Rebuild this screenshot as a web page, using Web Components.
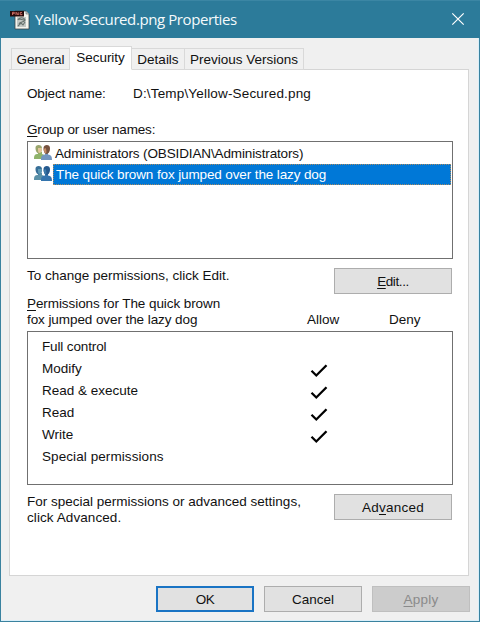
<!DOCTYPE html>
<html lang="en">
<head>
  <meta charset="utf-8">
  <title>Yellow-Secured.png Properties</title>
  <style>
    html, body {
      margin: 0;
      height: 100%;
      overflow: hidden;
    }
    body {
      font: 13.5px/16px "Liberation Sans", Arial, sans-serif;
      color: #111;
    }
  </style>
</head>
<body>
  <properties-window>
    <title-bar slot="title">Yellow-Secured.png Properties</title-bar>
    <tab-strip slot="tabs">
      <tab-item style="width: 59px">General</tab-item>
      <tab-item active style="width: 62px; letter-spacing: -.05px">Security</tab-item>
      <tab-item style="width: 53px">Details</tab-item>
      <tab-item style="width: 119px">Previous Versions</tab-item>
    </tab-strip>
    <security-page></security-page>
    <push-button slot="actions" default style="width: 98px; letter-spacing: -.6px">OK</push-button>
    <push-button slot="actions" style="width: 98px">Cancel</push-button>
    <push-button slot="actions" disabled style="width: 98px; letter-spacing: .25px"><u>A</u>pply</push-button>
  </properties-window>

  <script>
    // Window frame: title bar, tabs, page and the bottom row of buttons
    class PropertiesWindow extends HTMLElement {
      constructor() {
        super();
        this.attachShadow({ mode: 'open' });
        this.shadowRoot.innerHTML = `
          <style>
            :host {
              display: flex;
              flex-direction: column;
              box-sizing: border-box;
              width: 480px;
              height: 622px;
              background: #f0f0f0;
              border: 1px solid #3a829f;
              border-top: none;
              box-shadow: inset -1px 0 #d9effa, inset 0 -1px #d9effa;
            }
            .page {
              flex: none;
              box-sizing: border-box;
              width: 460px;
              height: 507px;
              margin-left: 8px;
              background: #fff;
              border: 1px solid #d5d5d5;
            }
            .actions {
              display: flex;
              justify-content: flex-end;
              gap: 10px;
              padding: 10px 9px 0 0;
            }
          </style>
          <slot name="title"></slot>
          <slot name="tabs"></slot>
          <div class="page"><slot></slot></div>
          <div class="actions"><slot name="actions"></slot></div>
        `;
      }
    }

    class TitleBar extends HTMLElement {
      constructor() {
        super();
        this.attachShadow({ mode: 'open' });
        this.shadowRoot.innerHTML = `
          <style>
            :host {
              display: flex;
              flex: none;
              align-items: center;
              box-sizing: border-box;
              height: 38px;
              margin: 0 -1px;
              padding: 0 15px 0 10px;
              background: #2c7b9a;
              border-top: 1px solid #3b86a4;
              color: #f4fafc;
              font: 15px/20px "Open Sans", "Noto Sans", sans-serif;
              letter-spacing: -.41px;
            }
            .text {
              flex: 1;
              margin: 0 0 1px 5px;
              white-space: nowrap;
            }
            svg { flex: none; }
            .close { margin-bottom: 1px; }
          </style>
          <svg width="20" height="20" viewBox="0 0 20 20">
            <path d="M5 1h11l3 3v15H5z" fill="#f5f5ee" stroke="#3b4549" stroke-width=".8"/>
            <path d="M16 1v3h3" fill="#cbd1d1" stroke="#596468" stroke-width=".6"/>
            <path d="M7 7h9v10H7z" fill="#c3c8c5"/>
            <path d="M8 10c1-3 6-3 7 0-1 3-5 1-6 4M8 16l3-3 2 2 2-3M9 9l5 1" fill="none" stroke="#68736f" stroke-width="1.1"/>
            <path d="M0 1h14v5.500H0z" fill="#260b0b"/>
            <path d="M2.500 5V2.300h1.800v1.400H2.600M6 5V2.200L8.200 5V2.200M12 2.500h-1.800v2.200H12V3.800" fill="none" stroke="#ec8177" stroke-width=".8"/>
          </svg>
          <div class="text"><slot></slot></div>
          <svg class="close" width="14" height="14" viewBox="0 0 14 14">
            <path d="M1.300 1.300l11.400 11.400M12.700 1.300L1.300 12.700" stroke="#fff" stroke-width="1.200"/>
          </svg>
        `;
      }
    }

    class TabStrip extends HTMLElement {
      constructor() {
        super();
        this.attachShadow({ mode: 'open' });
        this.shadowRoot.innerHTML = `
          <style>
            :host {
              display: flex;
              flex: none;
              align-items: flex-end;
              height: 32px;
              margin: 0 0 -1px;
              padding-left: 10px;
              z-index: 1;
            }
          </style>
          <slot></slot>
        `;
      }
    }

    class TabItem extends HTMLElement {
      constructor() {
        super();
        this.attachShadow({ mode: 'open' });
        this.shadowRoot.innerHTML = `
          <style>
            :host {
              display: flex;
              justify-content: center;
              box-sizing: border-box;
              height: 22px;
              padding-top: 3px;
              border: 1px solid #d9d9d9;
              border-left: none;
              white-space: nowrap;
            }
            :host(:first-child) { border-left: 1px solid #d9d9d9; }
            :host([active]) {
              height: 24px;
              background: #fff;
              border-bottom-color: #fff;
            }
          </style>
          <span><slot></slot></span>
        `;
      }
    }

    class PushButton extends HTMLElement {
      constructor() {
        super();
        this.attachShadow({ mode: 'open' });
        this.shadowRoot.innerHTML = `
          <style>
            :host {
              display: flex;
              flex: none;
              align-items: center;
              justify-content: center;
              box-sizing: border-box;
              width: 118px;
              height: 26px;
              padding-top: 1px;
              background: #e1e1e1;
              border: 1px solid #adadad;
            }
            :host([default]) { border: 2px solid #1a74c4; }
            :host([disabled]) {
              background: #ccc;
              border-color: #bfbfbf;
              color: #8a8a8a;
            }
            ::slotted(u) { text-underline-offset: 2px; }
          </style>
          <span><slot></slot></span>
        `;
      }
    }

    // Two-person icon, the colours differ between built-in and custom groups
    class GroupItem extends HTMLElement {
      constructor() {
        super();
        this.attachShadow({ mode: 'open' });
        const mixed = this.hasAttribute('builtin');
        const [headA, bodyA, headB, bodyB] = mixed
          ? ['#9aa56c', '#8fb36b', '#76523f', '#7296c0']
          : ['#386f98', '#5b91a8', '#24598e', '#3474ad'];
        this.shadowRoot.innerHTML = `
          <style>
            :host {
              display: flex;
              align-items: center;
              height: 21px;
              padding-left: 6px;
            }
            svg {
              flex: none;
              margin-bottom: 2px;
            }
            .label {
              flex: 1;
              box-sizing: border-box;
              height: 21px;
              margin: 0 1px;
              padding: 2px 0 0 1px;
              border: 1px solid transparent;
              white-space: nowrap;
            }
            :host([selected]) .label {
              padding-left: 2px;
              background: #0078d7;
              border: 1px dotted #a88a62;
              color: #fff;
            }
          </style>
          <svg width="18" height="17" viewBox="0 0 18 17">
            <path d="M0 15c0-4 1-5 4-5V8h4v2c3 1 4 2 4 5z" fill="${bodyA}"/>
            <path d="M1.500 4C1 0 8.500 0 8 4.500 8 7 7 9.500 5 9.500 3 9.500 1.500 7 1.500 4z" fill="${headA}"/>
            <path d="M4 4h4c0 3-1 5-2.500 5S4 7 4 4z" fill="${mixed ? '#e0c69b' : '#5d99b5'}"/>
            <path d="M7 16c0-4 1-5 4-5.500V8h3v2.500c3 .500 4 1.500 4 5.500z" fill="${bodyB}"/>
            <path d="M9.500 4c0-4 7-4 6.500.500 0 3-1.500 5.500-3.500 5.500s-3-3-3-6z" fill="${headB}"/>
            <path d="M9.600 5l2-1c1 2 1 4 .4 5.800C10.500 9 9.600 7 9.600 5z" fill="${mixed ? '#c28a66' : '#3b79a9'}"/>
          </svg>
          <div class="label"><slot></slot></div>
        `;
      }
    }

    class PermissionRow extends HTMLElement {
      constructor() {
        super();
        this.attachShadow({ mode: 'open' });
        this.shadowRoot.innerHTML = `
          <style>
            :host {
              display: flex;
              align-items: center;
              height: 22px;
              padding-left: 14px;
            }
            .name {
              width: 267px;
              white-space: nowrap;
            }
            svg { margin-top: 3px; }
          </style>
          <div class="name"><slot></slot></div>
          ${this.hasAttribute('allow') ? `
            <svg width="20" height="16" viewBox="0 0 20 16">
              <path d="M2.500 7.800L7.300 12.500L17.500 2.200" fill="none" stroke="#000" stroke-width="2.300"/>
            </svg>` : ''}
        `;
      }
    }

    class SecurityPage extends HTMLElement {
      constructor() {
        super();
        this.attachShadow({ mode: 'open' });
        this.shadowRoot.innerHTML = `
          <style>
            :host {
              display: flex;
              flex-direction: column;
              padding: 16px 15px 0 17px;
              white-space: nowrap;
            }
            u { text-underline-offset: 2px; }
            .object { display: flex; }
            .object span { width: 106px; }
            .group-label { margin-top: 20px; }
            .box {
              box-sizing: border-box;
              width: 426px;
              border: 1px solid #707070;
            }
            .groups {
              height: 118px;
              margin-top: 3px;
              padding-top: 1px;
            }
            .line {
              display: flex;
              justify-content: space-between;
              padding-right: 1px;
            }
            .edit { margin-top: 9px; height: 26px; }
            .head {
              display: flex;
              align-items: flex-end;
              margin-top: 2px;
            }
            .head .who { width: 280px; }
            .head .allow { width: 82px; }
            .perms {
              height: 154px;
              margin-top: 3px;
              padding-top: 4px;
            }
            .advanced { margin-top: 9px; }
          </style>
          <div class="object">
            <span style="letter-spacing: -.13px">Object name:</span>
            <div style="letter-spacing: .17px">D:\\Temp\\Yellow-Secured.png</div>
          </div>
          <div class="group-label" style="letter-spacing: -.15px"><u>G</u>roup or user names:</div>
          <div class="box groups">
            <group-item builtin style="letter-spacing: -.13px">Administrators (OBSIDIAN\\Administrators)</group-item>
            <group-item selected style="letter-spacing: -.12px">The quick brown fox jumped over the lazy dog</group-item>
          </div>
          <div class="line edit">
            <span>To change permissions, click Edit.</span>
            <push-button style="letter-spacing: -.4px"><u>E</u>dit...</push-button>
          </div>
          <div class="head">
            <div class="who" style="letter-spacing: -.08px"><u>P</u>ermissions for The quick brown<br>fox jumped over the lazy dog</div>
            <div class="allow">Allow</div>
            <div>Deny</div>
          </div>
          <div class="box perms">
            <permission-row style="letter-spacing: -.13px">Full control</permission-row>
            <permission-row allow>Modify</permission-row>
            <permission-row allow>Read &amp; execute</permission-row>
            <permission-row allow>Read</permission-row>
            <permission-row allow>Write</permission-row>
            <permission-row style="letter-spacing: .08px">Special permissions</permission-row>
          </div>
          <div class="line advanced">
            <div>
              <div>For special permissions or advanced settings,</div>
              <div style="letter-spacing: .08px">click Advanced.</div>
            </div>
            <push-button style="letter-spacing: .25px">Ad<u>v</u>anced</push-button>
          </div>
        `;
      }
    }

    customElements.define('push-button', PushButton);
    customElements.define('group-item', GroupItem);
    customElements.define('permission-row', PermissionRow);
    customElements.define('tab-item', TabItem);
    customElements.define('tab-strip', TabStrip);
    customElements.define('title-bar', TitleBar);
    customElements.define('security-page', SecurityPage);
    customElements.define('properties-window', PropertiesWindow);
  </script>
</body>
</html>
